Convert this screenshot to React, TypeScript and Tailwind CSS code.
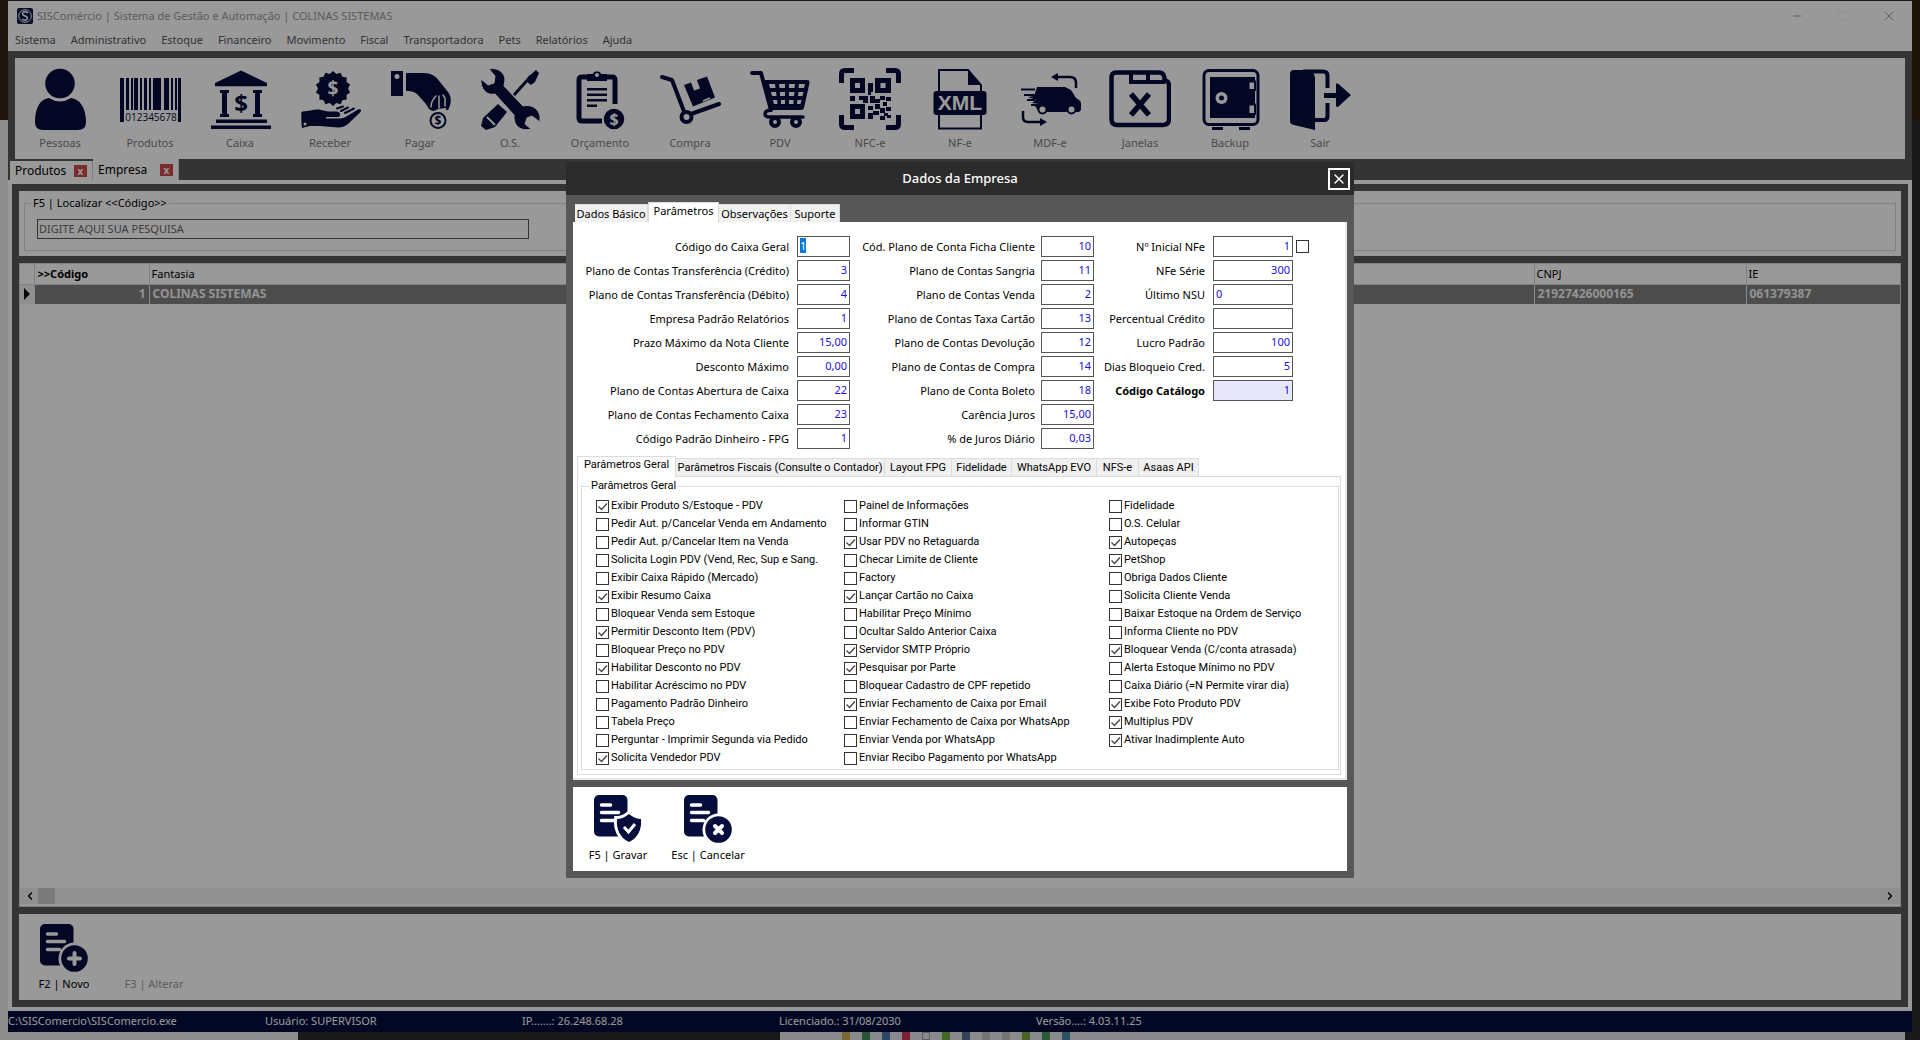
import { useEffect, useRef, type ReactNode } from 'react';
import clsx from 'clsx';
import { ChevronLeft, ChevronRight, Minus, Square, X } from 'lucide-react';

const NAVY = '#050d3d';

function Dollar({ x, y, size, color = NAVY }: { x: number; y: number; size: number; color?: string }) {
  return (
    <text x={x} y={y} fontSize={size} fontWeight="bold" textAnchor="middle" fill={color} fontFamily="Noto Sans, sans-serif">
      $
    </text>
  );
}

function ToolIcon({ children }: { children: ReactNode }) {
  return (
    <svg viewBox="0 0 62 62" className="h-[62px] w-[62px]" fill={NAVY} aria-hidden="true">
      {children}
    </svg>
  );
}

const barcode = [
  [1, 4, 1], [7, 3, 0], [12, 2, 0], [15, 4, 0], [21, 2, 0], [25, 3, 0], [30, 2, 0],
  [34, 8, 0], [45, 5, 0], [52, 2, 0], [56, 2, 0], [59, 3, 1],
];

// serrated badge outline
const sealPoints = Array.from({ length: 28 }, (_, i) => {
  const r = i % 2 === 0 ? 17.5 : 15;
  const a = (i / 28) * Math.PI * 2 - Math.PI / 2;
  return `${(34 + r * Math.cos(a)).toFixed(1)},${(20.5 + r * Math.sin(a)).toFixed(1)}`;
}).join(' ');

const qrBlocks = [
  [29, 15, 5, 9], [29, 24, 3, 3], [11, 28, 5, 5], [20, 28, 9, 4], [24, 32, 5, 3], [31, 28, 5, 7], [36, 31, 5, 4],
  [41, 28, 5, 4], [47, 29, 5, 4], [44, 34, 4, 4], [29, 38, 5, 4], [36, 36, 5, 5], [29, 45, 5, 6], [34, 43, 6, 4],
  [41, 40, 5, 5], [47, 39, 5, 4], [45, 45, 4, 3], [41, 48, 5, 4], [48, 47, 4, 3],
];

const tools: { label: string; icon: ReactNode }[] = [
  {
    label: 'Pessoas',
    icon: (
      <>
        <circle cx="31" cy="15.5" r="14.8" />
        <path d="M20 30q11 7 22 0c9 1 15 10 15 24q0 8-8 8H14q-8 0-8-8c0-14 5-23 14-24z" />
      </>
    ),
  },
  {
    label: 'Produtos',
    icon: (
      <>
        {barcode.map(([x, w, tall]) => (
          <rect key={x} x={x} y="10" width={w} height={tall ? 44 : 32} />
        ))}
        <text x="32" y="53" fontSize="10" textAnchor="middle" fontFamily="Open Sans, sans-serif">
          012345678
        </text>
      </>
    ),
  },
  {
    label: 'Caixa',
    icon: (
      <>
        <path d="M32 2.5 58 15v3.300H6V15z" />
        <path d="M11 22h9v3h-2v21h2v3h-9v-3h2V25h-2zM44 22h9v3h-2v21h2v3h-9v-3h2V25h-2zM7 51.500h51V55H7zM2 57.500h60V61H2z" />
        <Dollar x={32} y={44} size={24} />
      </>
    ),
  },
  {
    label: 'Receber',
    icon: (
      <>
        <polygon points={sealPoints} />
        <Dollar x={34} y={27} size={19} color="#fff" />
        <path d="M4 43.500c7 0 12-3 18-1.500l7 1.500h9c4 1 4 5 1 5.500H27v1.500h14c3 0 5-1 8-3l10-6c3-1 4 1 2 3L49 56c-3 2.500-6 3.500-10 3.500L21 58l-10 0-8 2q-1-8-.5-16z" />
        <path d="m42 43 7-3.500M46 45l9-4.500M38 40.500l6-2" fill="none" stroke={NAVY} strokeWidth="2" strokeLinecap="round" />
        <circle cx="6" cy="56" r="1.500" fill="#fff" />
      </>
    ),
  },
  {
    label: 'Pagar',
    icon: (
      <>
        <path d="M2 3h12v25H2z" />
        <circle cx="8" cy="8.500" r="2.500" fill="#fff" />
        <path d="M17 5h17c8 0 13 3 17 9l8 10c3 4 4 9 1 16-1 3-3 3-3 0l-8 1-4 2c-4 0-6-3-8-7L28 26c-4-3-8-3-11-3z" />
        <path d="M42 39c0-5 3-9 5-11M50 40V28M56 38V30l-2-3" fill="none" stroke="#fff" strokeWidth="1.500" strokeLinecap="round" />
        <circle cx="49" cy="52.500" r="7.500" fill="#fff" stroke={NAVY} strokeWidth="2" />
        <Dollar x={49} y={57} size={12} />
      </>
    ),
  },
  {
    label: 'O.S.',
    icon: (
      <>
        <path d="m52 8-17 19" stroke={NAVY} strokeWidth="3" />
        <path d="m49 9 8-7 3 3-4 9-4 3-5-4z" />
        <path d="m19 36 9 8-12 15-9 3-5-4 2-8z" />
        <path d="m8 49 8 8" stroke="#fff" strokeWidth="2" />
        <path
          d="M10 1c8-2 16 3 16 11l-1 6 19 20c8-2 15 2 17 10v6l-8-6-5 2-2 6 6 5c-10 3-18-3-17-14L16 26C8 28 1 21 2 11l7 6 6-2 1-7z"
          stroke="#fff"
          strokeWidth="1"
        />
      </>
    ),
  },
  {
    label: 'Orçamento',
    icon: (
      <>
        <path d="M33 53H13q-3 0-3-3V12q0-3 3-3h30q3 0 3 3v24" fill="none" stroke={NAVY} strokeWidth="5" />
        <path d="M18 6h5.500a5 5 0 0 1 9 0H38v7H18z" />
        <circle cx="28" cy="7" r="2" fill="#fff" />
        <path d="M18 20h20v2.500H18zM18 25.500h20V28H18zM18 31h20v2.500H18zM18 36.500h10V39H18z" />
        <circle cx="45" cy="51" r="11" stroke="#fff" strokeWidth="1.500" />
        <Dollar x={45} y={57} size={16} color="#fff" />
      </>
    ),
  },
  {
    label: 'Compra',
    icon: (
      <>
        <path d="m3 9 10 3 13 34M32 46l28-10" fill="none" stroke={NAVY} strokeWidth="4" strokeLinecap="round" strokeLinejoin="round" />
        <path d="m25 17 7-2.500 3 8 6-2-3-8.500 10-3.500 8 21-22 9z" />
        <path d="m44 33 7-3" stroke="#fff" strokeWidth="1.500" />
        <circle cx="27.500" cy="49" r="5" fill="#fff" stroke={NAVY} strokeWidth="4" />
      </>
    ),
  },
  {
    label: 'PDV',
    icon: (
      <>
        <path d="M3 5h9l10 37" fill="none" stroke={NAVY} strokeWidth="4" strokeLinecap="round" strokeLinejoin="round" />
        <path d="M14 12h44q3 0 2.500 3L55 40q-.5 2-3 2H22z" />
        <path
          d="M20 16h6l.5 4H21zM30 16h6v4h-5.500zM40 16h6l-.5 4H40zM50 16h6l-1 4h-5.500zM22 24h5l.5 4H23zM31 24h5v4h-5zM40 24h5.500l-.5 4h-5zM49.500 24h5l-1 4h-4.500zM24 32h4l.5 4H25zM32 32h4v4h-4zM40 32h4.500v4H40zM48.500 32h4l-1 4H48z"
          fill="#fff"
        />
        <path d="M21 42q-5 1-5 4t5 3h33" fill="none" stroke={NAVY} strokeWidth="3.500" strokeLinecap="round" />
        <circle cx="26" cy="54" r="4" fill="#fff" stroke={NAVY} strokeWidth="4" />
        <circle cx="47" cy="54" r="4" fill="#fff" stroke={NAVY} strokeWidth="4" />
      </>
    ),
  },
  {
    label: 'NFC-e',
    icon: (
      <>
        <path d="M2.500 15V6q0-3.500 3.500-3.500h9M47 2.500h9q3.500 0 3.500 3.500v9M59.500 47v9q0 3.500-3.500 3.500h-9M15 59.500H6q-3.500 0-3.500-3.500v-9" fill="none" stroke={NAVY} strokeWidth="5" />
        <path
          d="M11 10h15v15H11zM16 15v5h5v-5zM36 10h16v15H36zM41.500 15v5h5v-5zM11 36h15v15H11zM16 41v5h5v-5z"
          fillRule="evenodd"
        />
        {qrBlocks.map(([x, y, w, h]) => (
          <rect key={`${x}-${y}`} x={x} y={y} width={w} height={h} />
        ))}
      </>
    ),
  },
  {
    label: 'NF-e',
    icon: (
      <>
        <path d="M10 24V2h29l13 15v7M10 46v14.500h42V46" fill="none" stroke={NAVY} strokeWidth="2" />
        <path d="M39 2v15h13z" />
        <rect x="4.500" y="23" width="53" height="24" rx="3" />
        <text x="31" y="42" fontSize="21" fontWeight="bold" textAnchor="middle" fill="#fff" fontFamily="Liberation Sans, sans-serif">
          XML
        </text>
      </>
    ),
  },
  {
    label: 'MDF-e',
    icon: (
      <>
        <path d="M18 19h28l6 3 5 8 3 2q2 1 2 4v6l-2 2H20l-4-6 4-2-7-1 4-3-8-3 6-1z" />
        <path d="M2 21.500h14M5 27h12M8 32h8M12 37h8" stroke={NAVY} strokeWidth="2" />
        <path d="M50 24h3l3 6h-6z" />
        <circle cx="23.500" cy="41.500" r="4" fill="#fff" stroke={NAVY} strokeWidth="2" />
        <circle cx="52.500" cy="41.500" r="4" fill="#fff" stroke={NAVY} strokeWidth="2" />
        <path d="M57 20v-5q0-6-6-6H37M4 43v6q0 5 5 5h14" fill="none" stroke={NAVY} strokeWidth="2.500" />
        <path d="m32 9 7-4v8zM28 54l-7-4v8z" />
      </>
    ),
  },
  {
    label: 'Janelas',
    icon: (
      <>
        <path d="M7 4.500h43q5 0 5.500 5.500v2.500q4.500.5 4.500 5.500v33q0 6-6 6H8q-5.500 0-5.500-6V10q0-5.500 4.500-5.500z" fill="none" stroke={NAVY} strokeWidth="4.500" />
        <path d="M20 5h4v7h32v4H20zM37 5h4v8h-4z" />
        <path d="m22 26 18 21M40 26 22 47" stroke={NAVY} strokeWidth="5.500" />
      </>
    ),
  },
  {
    label: 'Backup',
    icon: (
      <>
        <rect x="5" y="2.500" width="54" height="54" rx="5" fill="none" stroke={NAVY} strokeWidth="3" />
        <path d="M11 9h45v41H11zM13 59h11v3H13zM40 59h11v3H40z" />
        <path d="M49.500 13.500H56V22h-6.500zM49.500 36.500H56V46h-6.500z" fill="#fff" stroke={NAVY} strokeWidth="2" />
        <circle cx="22.500" cy="30" r="6" fill="#fff" />
        <circle cx="22.500" cy="30" r="2.500" />
      </>
    ),
  },
  {
    label: 'Sair',
    icon: (
      <>
        <path d="M1 6q0-4 4-4h13q8 2 8 8v52L5 57q-4-1-4-4z" />
        <path d="M14 3.500h20q4.500 0 4.500 4V20M24 52h11q3.500 0 3.500-4V35" fill="none" stroke={NAVY} strokeWidth="4" />
        <path d="M35 25h12V17q0-3 2.500-1L62 27 49.500 38.500Q47 40 47 37V30H35z" />
      </>
    ),
  },
];

function DocIcon({ badge }: { badge: 'plus' | 'check' | 'cancel' }) {
  return (
    <svg viewBox="0 0 48 48" className="h-12 w-12" fill={NAVY} aria-hidden="true">
      <rect width="33.500" height="41.500" rx="5" />
      <path d="M7.500 10h9M7.500 17.500h17M7.500 25.500h12" stroke="#fff" strokeWidth="3.500" strokeLinecap="round" />
      {badge === 'check' ? (
        <>
          <path d="M35 19q6 5 12 5c1 10-3 19-12 23-9-4-13-13-12-23q6 0 12-5z" stroke="#fff" strokeWidth="6" />
          <path d="M35 19q6 5 12 5c1 10-3 19-12 23-9-4-13-13-12-23q6 0 12-5z" />
          <path d="m30 32 4.500 5 6.500-8" fill="none" stroke="#fff" strokeWidth="3" />
        </>
      ) : (
        <>
          <circle cx="34.500" cy="34.500" r="16" fill="#fff" />
          <circle cx="34.500" cy="34.500" r="13.300" />
          <path
            d={badge === 'plus' ? 'M34.500 29v11M29 34.500h11' : 'm31 31 7 7M38 31l-7 7'}
            stroke="#fff"
            strokeWidth="4"
            strokeLinecap="round"
          />
        </>
      )}
    </svg>
  );
}

const menus = [
  'Sistema', 'Administrativo', 'Estoque', 'Financeiro', 'Movimento', 'Fiscal', 'Transportadora', 'Pets', 'Relatórios', 'Ajuda',
];

const openTabs = [
  { label: 'Produtos', active: false },
  { label: 'Empresa', active: true },
];

type Field = { label: string; value: string; left?: boolean; bold?: boolean; check?: boolean };

const fieldColumns: { labelClass: string; inputClass: string; fields: Field[] }[] = [
  {
    labelClass: 'w-56 pr-2',
    inputClass: 'w-[53px]',
    fields: [
      { label: 'Código do Caixa Geral', value: '1', left: true },
      { label: 'Plano de Contas Transferência (Crédito)', value: '3' },
      { label: 'Plano de Contas Transferência (Débito)', value: '4' },
      { label: 'Empresa Padrão Relatórios', value: '1' },
      { label: 'Prazo Máximo da Nota Cliente', value: '15,00' },
      { label: 'Desconto Máximo', value: '0,00' },
      { label: 'Plano de Contas Abertura de Caixa', value: '22' },
      { label: 'Plano de Contas Fechamento Caixa', value: '23' },
      { label: 'Código Padrão Dinheiro - FPG', value: '1' },
    ],
  },
  {
    labelClass: 'w-[191px] pr-1.5',
    inputClass: 'w-[53px]',
    fields: [
      { label: 'Cód. Plano de Conta Ficha Cliente', value: '10' },
      { label: 'Plano de Contas Sangria', value: '11' },
      { label: 'Plano de Contas Venda', value: '2' },
      { label: 'Plano de Contas Taxa Cartão', value: '13' },
      { label: 'Plano de Contas Devolução', value: '12' },
      { label: 'Plano de Contas de Compra', value: '14' },
      { label: 'Plano de Conta Boleto', value: '18' },
      { label: 'Carência Juros', value: '15,00' },
      { label: '% de Juros Diário', value: '0,03' },
    ],
  },
  {
    labelClass: 'w-[119px] pr-2',
    inputClass: 'w-20',
    fields: [
      { label: 'Nº Inicial NFe', value: '1', check: true },
      { label: 'NFe Série', value: '300' },
      { label: 'Último NSU', value: '0', left: true },
      { label: 'Percentual Crédito', value: '' },
      { label: 'Lucro Padrão', value: '100' },
      { label: 'Dias Bloqueio Cred.', value: '5' },
      { label: 'Código Catálogo', value: '1', bold: true },
    ],
  },
];

const options: [string, boolean][][] = [
  [
    ['Exibir Produto S/Estoque - PDV', true],
    ['Pedir Aut. p/Cancelar Venda em Andamento', false],
    ['Pedir Aut. p/Cancelar Item na Venda', false],
    ['Solicita Login PDV (Vend, Rec, Sup e Sang.', false],
    ['Exibir Caixa Rápido (Mercado)', false],
    ['Exibir Resumo Caixa', true],
    ['Bloquear Venda sem Estoque', false],
    ['Permitir Desconto Item (PDV)', true],
    ['Bloquear Preço no PDV', false],
    ['Habilitar Desconto no PDV', true],
    ['Habilitar Acréscimo no PDV', false],
    ['Pagamento Padrão Dinheiro', false],
    ['Tabela Preço', false],
    ['Perguntar - Imprimir Segunda via Pedido', false],
    ['Solicita Vendedor PDV', true],
  ],
  [
    ['Painel de Informações', false],
    ['Informar GTIN', false],
    ['Usar PDV no Retaguarda', true],
    ['Checar Limite de Cliente', false],
    ['Factory', false],
    ['Lançar Cartão no Caixa', true],
    ['Habilitar Preço Mínimo', false],
    ['Ocultar Saldo Anterior Caixa', false],
    ['Servidor SMTP Próprio', true],
    ['Pesquisar por Parte', true],
    ['Bloquear Cadastro de CPF repetido', false],
    ['Enviar Fechamento de Caixa por Email', true],
    ['Enviar Fechamento de Caixa por WhatsApp', false],
    ['Enviar Venda por WhatsApp', false],
    ['Enviar Recibo Pagamento por WhatsApp', false],
  ],
  [
    ['Fidelidade', false],
    ['O.S. Celular', false],
    ['Autopeças', true],
    ['PetShop', true],
    ['Obriga Dados Cliente', false],
    ['Solicita Cliente Venda', false],
    ['Baixar Estoque na Ordem de Serviço', false],
    ['Informa Cliente no PDV', false],
    ['Bloquear Venda (C/conta atrasada)', true],
    ['Alerta Estoque Mínimo no PDV', false],
    ['Caixa Diário (=N Permite virar dia)', false],
    ['Exibe Foto Produto PDV', true],
    ['Multiplus PDV', true],
    ['Ativar Inadimplente Auto', true],
  ],
];

function CheckBox({ checked, name }: { checked: boolean; name?: string }) {
  return (
    <span className="relative flex size-[13px] shrink-0">
      <input
        type="checkbox"
        defaultChecked={checked}
        aria-label={name}
        className="peer size-[13px] appearance-none border border-[#333] bg-white"
      />
      <svg viewBox="0 0 13 13" className="pointer-events-none absolute inset-0 hidden peer-checked:block" fill="none" stroke="#444">
        <path d="m2.500 6.500 3 3 5.500-6" strokeWidth="1.300" />
      </svg>
    </span>
  );
}

function Tabs({ items, active }: { items: { label: string; width: string }[]; active: string }) {
  return (
    <div role="tablist" className="flex items-end">
      {items.map((tab) => (
        <button
          key={tab.label}
          type="button"
          role="tab"
          aria-selected={tab.label === active}
          className={clsx(
            'shrink-0 border-x border-t border-[#dcdcdc] leading-4 whitespace-nowrap',
            tab.width,
            tab.label === active ? 'relative -mb-px h-[21px] bg-white pb-1' : 'h-[18px] border-l-0 bg-[#f0f0f0]',
          )}
        >
          {tab.label}
        </button>
      ))}
    </div>
  );
}

function FormFields() {
  const firstInput = useRef<HTMLInputElement>(null);

  useEffect(() => {
    firstInput.current?.focus();
    firstInput.current?.select();
  }, []);

  return (
    <div className="flex">
      {fieldColumns.map((col, c) => (
        <div key={c} className="flex flex-col gap-[3px]">
          {col.fields.map((f, i) => (
            <div key={f.label} className="flex items-center">
              <label
                htmlFor={`campo-${c}-${i}`}
                className={clsx('shrink-0 text-right leading-4 whitespace-nowrap', col.labelClass, f.bold && 'font-bold')}
              >
                {f.label}
              </label>
              <input
                id={`campo-${c}-${i}`}
                ref={c === 0 && i === 0 ? firstInput : undefined}
                defaultValue={f.value}
                className={clsx(
                  'h-[21px] border border-[#555] px-0.5 pb-0.5 text-[#1a10d8] outline-none selection:bg-[#0078d7] selection:text-white',
                  col.inputClass,
                  f.left ? 'text-left' : 'text-right',
                  f.bold ? 'bg-[#e6e8fa]' : 'bg-white',
                )}
              />
              {f.check && (
                <span className="ml-[3px]">
                  <CheckBox checked={false} name="Nº Inicial NFe" />
                </span>
              )}
            </div>
          ))}
        </div>
      ))}
    </div>
  );
}

function EmpresaDialog() {
  return (
    <div role="dialog" aria-label="Dados da Empresa" className="w-[788px] bg-[#575757] text-[11px] text-black">
      <div className="flex h-[33px] items-center bg-[#2b2b2b] pr-1 pl-[26px]">
        <h2 className="flex-1 text-center text-[13px] font-medium text-white">Dados da Empresa</h2>
        <button type="button" aria-label="Fechar" className="flex size-[22px] items-center justify-center border-2 border-white text-white">
          <X className="size-4" strokeWidth={2} />
        </button>
      </div>

      <div className="p-[7px]">
        <div className="pl-[2px]">
          <Tabs
            active="Parâmetros"
            items={[
              { label: 'Dados Básico', width: 'w-[73px]' },
              { label: 'Parâmetros', width: 'w-[71px]' },
              { label: 'Observações', width: 'w-[72px]' },
              { label: 'Suporte', width: 'w-[49px]' },
            ]}
          />
        </div>
        <div className="border-r-2 border-b-2 border-gray-200 bg-white pt-[14px] pr-1 pb-[3px] pl-1">
          <div className="-ml-1">
            <FormFields />
          </div>

          <div className="mt-[7px] font-[Roboto,sans-serif]">
            <Tabs
              active="Parâmetros Geral"
              items={[
                { label: 'Parâmetros Geral', width: 'w-[99px]' },
                { label: 'Parâmetros Fiscais (Consulte o Contador)', width: 'w-[209px]' },
                { label: 'Layout FPG', width: 'w-[67px]' },
                { label: 'Fidelidade', width: 'w-[60px]' },
                { label: 'WhatsApp EVO', width: 'w-[85px]' },
                { label: 'NFS-e', width: 'w-[42px]' },
                { label: 'Asaas API', width: 'w-[60px]' },
              ]}
            />
            <div className="border border-[#dcdcdc] pt-px pr-px pb-1 pl-[3px]">
              <fieldset className="border border-[#dcdcdc] px-[14px] pt-[3px] pb-[2px]">
                <legend className="-ml-1.5 px-px leading-4">Parâmetros Geral</legend>
                <div className="grid grid-cols-[248px_265px_1fr]">
                  {options.map((col, c) => (
                    <div key={c} className="flex flex-col">
                      {col.map(([label, checked]) => (
                        <label key={label} className="flex h-[18px] items-center gap-[2px] whitespace-nowrap">
                          <CheckBox checked={checked} />
                          {label}
                        </label>
                      ))}
                    </div>
                  ))}
                </div>
              </fieldset>
            </div>
          </div>
        </div>

        <div className="mt-[7px] flex h-[84px] items-start bg-white px-2 pt-2">
          <button type="button" className="flex w-[74px] flex-col items-center gap-1 leading-4">
            <DocIcon badge="check" />
            F5 | Gravar
          </button>
          <button type="button" className="flex w-[106px] flex-col items-center gap-1 leading-4">
            <DocIcon badge="cancel" />
            Esc | Cancelar
          </button>
        </div>
      </div>
    </div>
  );
}

function CompanyTable() {
  return (
    <table className="w-full table-fixed border-collapse leading-4">
      <colgroup>
        <col className="w-[14px]" />
        <col className="w-[115px]" />
        <col />
        <col className="w-[212px]" />
        <col className="w-[154px]" />
      </colgroup>
      <thead>
        <tr className="h-5 text-left">
          <th className="border-r border-b border-gray-300" />
          <th className="border-r border-b border-gray-300 px-[3px] font-bold">&gt;&gt;Código</th>
          <th className="border-r border-b border-gray-300 px-[2px] font-normal">Fantasia</th>
          <th className="border-r border-b border-gray-300 px-[2px] font-normal">CNPJ</th>
          <th className="border-b border-gray-300 px-[2px] font-normal">IE</th>
        </tr>
      </thead>
      <tbody>
        <tr className="h-5 bg-[#808080] text-xs font-bold text-[#f4f4f4]">
          <td className="border-r border-gray-200 bg-[#f0f0f0]">
            <svg viewBox="0 0 6 12" className="ml-1 h-3 w-1.5">
              <path d="M0 0l6 6-6 6z" fill="black" />
            </svg>
          </td>
          <td className="border-r border-gray-200 px-[3px] text-right">1</td>
          <td className="border-r border-gray-200 px-[3px]">COLINAS SISTEMAS</td>
          <td className="border-r border-gray-200 px-[3px]">21927426000165</td>
          <td className="px-[3px]">061379387</td>
        </tr>
      </tbody>
    </table>
  );
}

function MainWindow() {
  return (
    <div className="mt-px flex min-w-0 flex-1 flex-col bg-[#575757] text-[11px] text-black">
      <header className="bg-white pb-px">
        <div className="flex h-[30px] items-center gap-1 pr-[15px] pl-[9px] text-[#999]">
          <svg viewBox="0 0 16 16" className="size-4">
            <rect width="16" height="16" rx="2" fill="#0b1445" />
            <circle cx="8" cy="8" r="6.300" fill="none" stroke="#fff" strokeWidth="1" />
            <path d="M11 5C9 3 5 3.500 5.500 6s5 1.500 5 4-3.500 3-5.500 1" fill="none" stroke="#fff" strokeWidth="1.400" />
          </svg>
          <h1 className="flex-1">SISComércio | Sistema de Gestão e Automação | COLINAS SISTEMAS</h1>
          <div className="flex items-center gap-[33px]">
            <button type="button" aria-label="Minimizar"><Minus className="size-3" strokeWidth={2} /></button>
            <button type="button" aria-label="Maximizar" className="text-gray-200"><Square className="size-3" strokeWidth={1} /></button>
            <button type="button" aria-label="Fechar"><X className="size-4" strokeWidth={1.5} /></button>
          </div>
        </div>
        <nav className="flex h-[19px] items-center gap-[15px] px-[7px] text-[#555]">
          {menus.map((m) => (
            <button key={m} type="button">{m}</button>
          ))}
        </nav>
      </header>

      <div className="mx-[7px] mt-[7px] flex h-[101px] bg-white">
        {tools.map((t) => (
          <button key={t.label} type="button" className="flex w-[90px] flex-col items-center pt-[10px] leading-4 text-[#7c7c7c]">
            <ToolIcon>{t.icon}</ToolIcon>
            <span className="mt-[5px]">{t.label}</span>
          </button>
        ))}
      </div>

      <div className="flex h-[21px] items-end pl-[2px] text-xs">
        {openTabs.map((t) => (
          <div
            key={t.label}
            className={clsx(
              'flex items-center justify-between border-r border-gray-300 bg-white pl-[5px]',
              t.active ? 'h-[21px] w-[86px]' : 'h-[19px] w-[83px]',
            )}
          >
            <button type="button">{t.label}</button>
            <button
              type="button"
              aria-label={`Fechar ${t.label}`}
              className="mr-[5px] flex h-3 w-[13px] items-center justify-center bg-[#cc4a4a] text-[10px] leading-3 font-bold text-white"
            >
              x
            </button>
          </div>
        ))}
      </div>

      <main className="flex flex-1 flex-col border-4 border-white bg-[#575757]">
        <div className="flex flex-1 flex-col gap-[7px] p-[7px]">
          <section className="bg-white px-[5px] pt-1 pb-[5px]">
            <fieldset className="border border-gray-300 px-3 pt-2 pb-[11px]">
              <legend className="-ml-1.5 px-0.5 leading-4">F5 | Localizar &lt;&lt;Código&gt;&gt;</legend>
              <input
                aria-label="Localizar"
                defaultValue="DIGITE AQUI SUA PESQUISA"
                className="block h-5 w-[492px] border border-[#555] bg-white px-px pb-px text-[#666]"
              />
            </fieldset>
          </section>

          <section className="flex flex-1 flex-col justify-between border border-gray-300 bg-white">
            <CompanyTable />
            <div className="mb-0.5 flex h-4 items-center justify-between bg-[#f0f0f0] px-1">
              <div className="flex items-center gap-0.5">
                <button type="button" aria-label="Rolar para a esquerda"><ChevronLeft className="size-3" strokeWidth={3} /></button>
                <div className="h-4 w-[17px] bg-[#cdcdcd]" />
              </div>
              <button type="button" aria-label="Rolar para a direita"><ChevronRight className="size-3" strokeWidth={3} /></button>
            </div>
          </section>

          <section className="flex h-[86px] bg-white px-2 pt-[10px]">
            <button type="button" className="flex w-[74px] flex-col items-center gap-1 leading-4">
              <DocIcon badge="plus" />
              F2 | Novo
            </button>
            <button type="button" disabled className="flex w-[106px] flex-col items-center justify-end pb-[8px] leading-4 text-[#999]">
              F3 | Alterar
            </button>
          </section>
        </div>
      </main>

      <footer className="flex h-[21px] items-center bg-[#040c3c] text-white">
        <span className="w-[257px]">C:\SISComercio\SISComercio.exe</span>
        <span className="w-[257px]">Usuário: SUPERVISOR</span>
        <span className="w-[257px]">IP.......: 26.248.68.28</span>
        <span className="w-[257px]">Licenciado.: 31/08/2030</span>
        <span className="w-[257px]">Versão....: 4.03.11.25</span>
      </footer>
    </div>
  );
}

export default function App() {
  return (
    <div className="relative flex min-h-screen flex-col bg-[#2b2b2b] font-['Noto_Sans','Open_Sans',sans-serif]">
      <div className="flex flex-1">
        <div className="flex w-2 flex-col">
          <div className="h-[120px] bg-[#33241a]" />
          <div className="flex-1 bg-[#ebebeb]" />
        </div>
        <MainWindow />
        <div className="flex w-2 flex-col">
          <div className="h-[120px] bg-[#33220f]" />
          <div className="flex-1 bg-[#2b2b2b]" />
        </div>
      </div>
      <div className="flex h-2">
        <div className="w-[298px] bg-[#ebebeb]" />
        <div className="w-[482px] bg-[#2b2b2b]" />
        <div className="flex flex-1 gap-3 bg-[#e6e6ea] pl-[62px]">
          <i className="h-2 w-2 bg-[#c9b04a]" />
          <i className="h-2 w-2 bg-[#3f8f5a]" />
          <i className="h-2 w-2 bg-[#4a78a8]" />
          <i className="h-2 w-2 bg-[#d03a5a]" />
          <i className="h-2 w-2 border border-gray-400" />
          <i className="h-2 w-2 bg-[#6fae3c]" />
          <i className="h-2 w-2 bg-[#5a6f8f]" />
          <i className="h-2 w-2 bg-[#c4c4c4]" />
          <i className="h-2 w-2 bg-[#c4c4c4]" />
          <i className="h-2 w-2 bg-[#79a83c]" />
          <i className="h-2 w-2 bg-[#4a9a5a]" />
          <i className="h-2 w-2 bg-[#4a88a8]" />
        </div>
        <div className="w-[15px] bg-[#2b2b2b]" />
      </div>

      <div className="absolute inset-0 flex items-center justify-center bg-black/40">
        <EmpresaDialog />
      </div>
    </div>
  );
}
